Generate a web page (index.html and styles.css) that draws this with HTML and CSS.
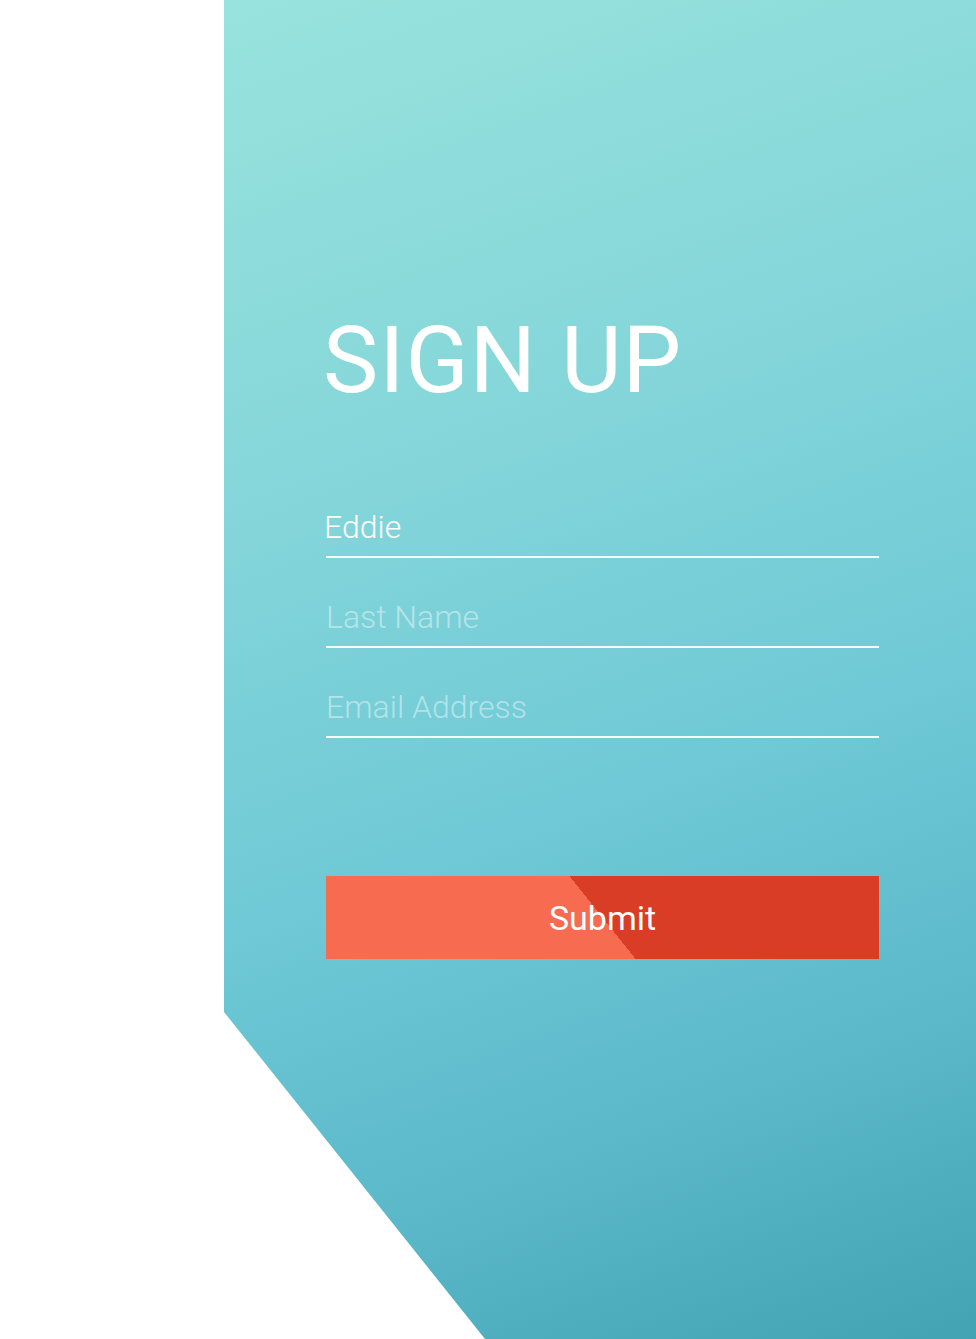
FILE: index.html
```html
<!DOCTYPE html>
<html lang="en">
<head>
<meta charset="utf-8">
<title>Sign Up</title>
<link rel="stylesheet" href="styles.css">
</head>
<body>
<main class="panel">
  <h1 class="title">SIGN UP</h1>
  <form class="form">
    <input class="field field-first" type="text" value="Eddie" aria-label="First Name">
    <input class="field" type="text" placeholder="Last Name">
    <input class="field" type="email" placeholder="Email Address">
    <button class="submit" type="button">Submit</button>
  </form>
</main>
</body>
</html>
```
FILE: styles.css
```css
html, body {
  margin: 0;
  padding: 0;
  background: #ffffff;
}

.panel {
  box-sizing: border-box;
  margin-left: 224px;
  width: 752px;
  height: 1339px;
  padding: 314px 0 0 99px;
  background: linear-gradient(160deg, #98e3dd 0%, #86d7da 30%, #6fc9d6 58%, #5ab8c9 80%, #43a3b2 100%);
  clip-path: polygon(0 0, 100% 0, 100% 100%, 261px 100%, 0 1012px);
  display: flex;
  flex-direction: column;
}

.title {
  margin: 0;
  font-family: Roboto, "Liberation Sans", sans-serif;
  font-weight: 400;
  font-size: 93px;
  line-height: 93px;
  letter-spacing: 1px;
  color: #ffffff;
}

.form {
  display: flex;
  flex-direction: column;
  width: 553px;
  margin-top: 96px;
  margin-left: 3px;
  gap: 35px;
}

.field {
  box-sizing: content-box;
  display: block;
  width: 553px;
  height: 48px;
  padding: 0 0 5px 0;
  margin: 0;
  border: none;
  border-bottom: 2px solid rgba(255, 255, 255, 0.92);
  background: transparent;
  outline: none;
  font-family: Roboto, "Liberation Sans", sans-serif;
  font-weight: 300;
  font-size: 32px;
  color: #ffffff;
}

.field-first {
  text-indent: -2px;
}

.field::placeholder {
  color: rgba(255, 255, 255, 0.45);
}

.submit {
  margin-top: 103px;
  width: 553px;
  height: 83px;
  border: none;
  padding: 0;
  background: linear-gradient(51.5deg, #f76b50 50%, #d93d26 50%);
  font-family: Roboto, "Liberation Sans", sans-serif;
  font-weight: 400;
  font-size: 34px;
  color: #ffffff;
  cursor: pointer;
}
```
